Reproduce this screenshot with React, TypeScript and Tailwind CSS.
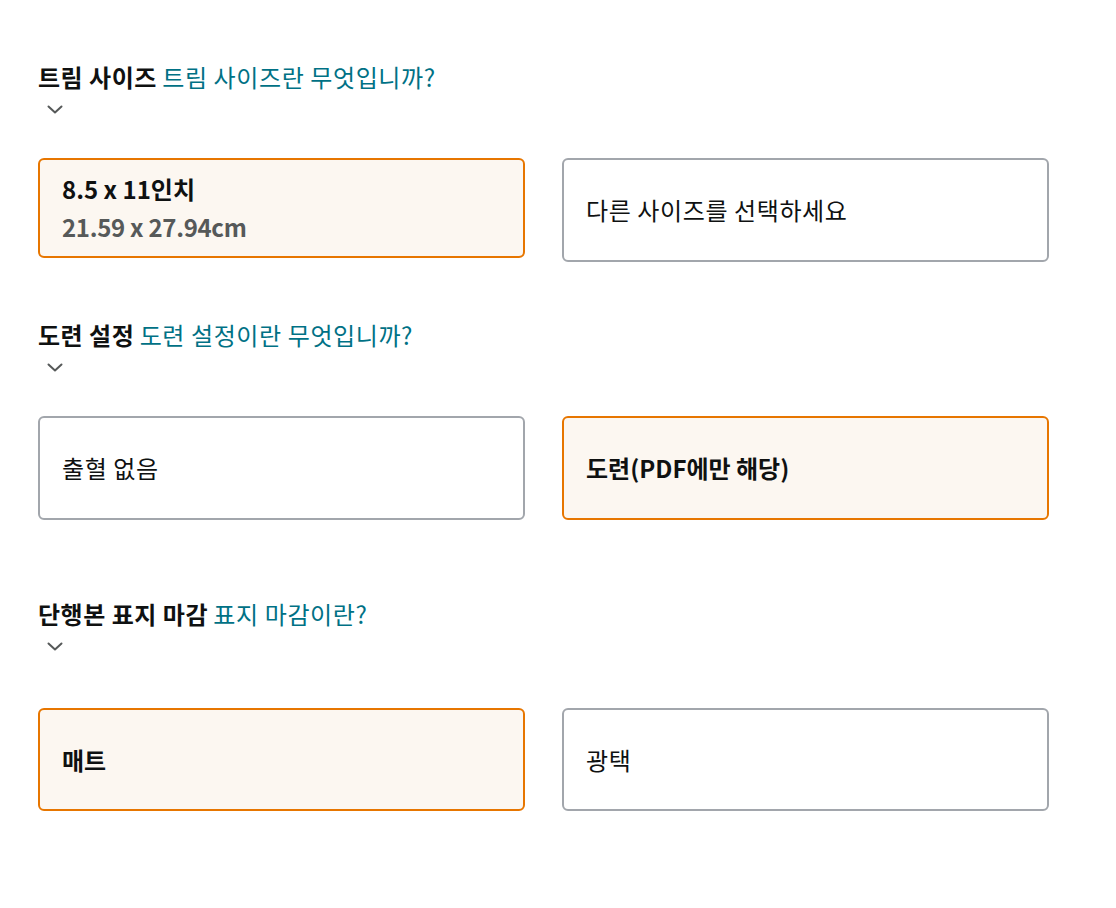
const font = "font-['Noto_Sans_CJK_KR','Noto_Sans',sans-serif]";

function Chevron() {
  return (
    <svg width="16" height="9" viewBox="0 0 16 9" className="ml-[9px] block">
      <path d="M1.5 1.5 L8 7.5 L14.5 1.5" fill="none" stroke="#565959" strokeWidth="2" strokeLinecap="round" strokeLinejoin="round" />
    </svg>
  );
}

function Heading({ title, link }: { title: string; link: string }) {
  return (
    <div>
      <div className="text-[24px] leading-[30px] whitespace-nowrap">
        <span className="font-bold text-[#0f1111] tracking-[0.5px]">{title}</span>{' '}
        <span className="text-[#007185] tracking-[0.6px]">{link}</span>
      </div>
      <div className="mt-[13px]">
        <Chevron />
      </div>
    </div>
  );
}

function Option({ selected, title, sub, bold, h }: { selected?: boolean; title: string; sub?: string; bold?: boolean; h: string }) {
  return (
    <div
      className={`w-[487px] ${h} rounded-[6px] border-2 px-[22px] flex flex-col justify-center ${
        selected ? 'border-[#e77600] bg-[#fcf7f1]' : 'border-[#a2a6ac] bg-white'
      }`}
    >
      <div className={`text-[24px] leading-[38px] text-[#0f1111] ${bold ? 'font-bold' : 'tracking-[0.6px]'}`}>{title}</div>
      {sub && <div className="text-[24px] leading-[38px] font-bold text-[#565959] tracking-[-0.3px]">{sub}</div>}
    </div>
  );
}

export default function App() {
  return (
    <div className={`${font} bg-white w-[1116px] h-[908px] pl-[38px] pt-[62px]`}>
      <Heading title="트림 사이즈" link="트림 사이즈란 무엇입니까?" />
      <div className="flex items-start gap-[37px] mt-[44px]">
        <Option selected bold title="8.5 x 11인치" sub="21.59 x 27.94cm" h="h-[100px]" />
        <Option title="다른 사이즈를 선택하세요" h="h-[104px]" />
      </div>

      <div className="mt-[58px]">
        <Heading title="도련 설정" link="도련 설정이란 무엇입니까?" />
      </div>
      <div className="flex items-start gap-[37px] mt-[44px]">
        <Option title="출혈 없음" h="h-[104px]" />
        <Option selected bold title="도련(PDF에만 해당)" h="h-[104px]" />
      </div>

      <div className="mt-[79px]">
        <Heading title="단행본 표지 마감" link="표지 마감이란?" />
      </div>
      <div className="flex items-start gap-[37px] mt-[57px]">
        <Option selected bold title="매트" h="h-[103px]" />
        <Option title="광택" h="h-[103px]" />
      </div>
    </div>
  );
}
